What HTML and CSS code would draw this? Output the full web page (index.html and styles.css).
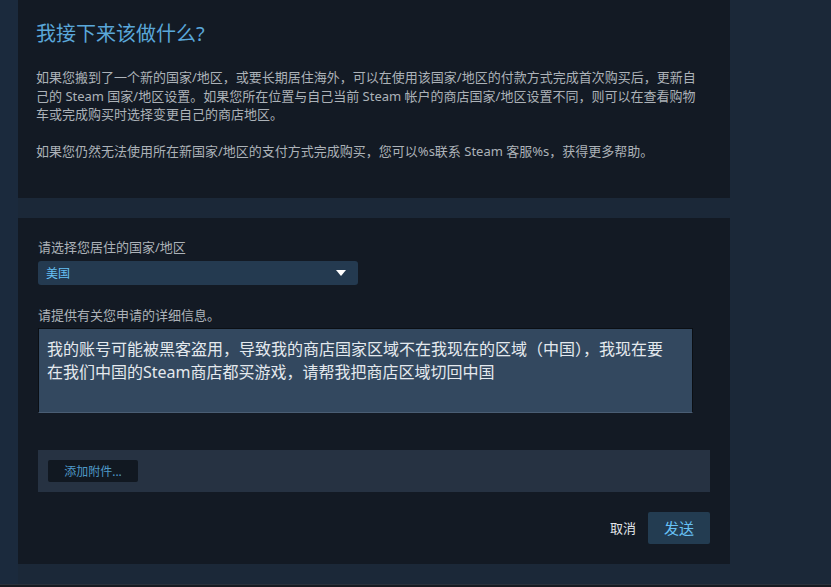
FILE: index.html
```html
<!doctype html>
<html lang="zh-cn">
  <head>
    <meta charset="utf-8" />
    <meta name="viewport" content="width=device-width" />
    <title>Steam 客服</title>
    <link rel="stylesheet" href="styles.css">
  </head>

  <body>
    <main class="page">
      <section class="panel info">
        <h2 class="info-title">我接下来该做什么?</h2>
        <p class="info-text">
          如果您搬到了一个新的国家/地区，或要长期居住海外，可以在使用该国家/地区的付款方式完成首次购买后，更新自己的 Steam 国家/地区设置。如果您所在位置与自己当前 Steam 帐户的商店国家/地区设置不同，则可以在查看购物车或完成购买时选择变更自己的商店地区。
        </p>
        <p class="info-text">
          如果您仍然无法使用所在新国家/地区的支付方式完成购买，您可以%s联系 Steam 客服%s，获得更多帮助。
        </p>
      </section>

      <form class="panel request">
        <label class="field-label" for="country">请选择您居住的国家/地区</label>
        <div class="select">
          <span class="select-value" id="country">美国</span>
          <span class="select-arrow"></span>
        </div>

        <label class="field-label details-label" for="details">请提供有关您申请的详细信息。</label>
        <div class="textarea" id="details">我的账号可能被黑客盗用，导致我的商店国家区域不在我现在的区域（中国），我现在要在我们中国的Steam商店都买游戏，请帮我把商店区域切回中国</div>

        <div class="attachments">
          <button type="button" class="attach-btn">添加附件...</button>
        </div>

        <div class="actions">
          <button type="button" class="cancel-btn">取消</button>
          <button type="button" class="send-btn">发送</button>
        </div>
      </form>
    </main>
    <footer class="footer"></footer>
  </body>
</html>
```

FILE: styles.css
```css
html {
  background: #171a21;
}
body {
  margin: 0;
  font-family: "Noto Sans", "Noto Sans CJK SC", sans-serif;
  background: linear-gradient(90deg, #1b2a3d 0, #1b2a3d 18px, #1b2838 18px);
}
.page {
  display: flex;
  flex-direction: column;
  gap: 20px;
  width: 712px;
  margin-left: 18px;
  padding-bottom: 20px;
}
.panel {
  background: #131a24;
}

/* top info block */
.info {
  padding: 20px 18px 37px;
}
.info-title {
  margin: 0 0 20px;
  font-size: 20px;
  line-height: 28px;
  font-weight: normal;
  color: #5aa7d9;
}
.info-text {
  margin: 0 0 18.5px;
  max-width: 662px;
  font-size: 13px;
  line-height: 18.5px;
  color: #acb2b8;
}
.info-text:last-child {
  margin-bottom: 0;
}

/* request form */
.request {
  display: flex;
  flex-direction: column;
  align-items: flex-start;
  padding: 20px;
}
.field-label {
  font-size: 13px;
  line-height: 18px;
  color: #acb2b8;
  margin-bottom: 5px;
}
.details-label {
  margin-top: 21px;
  margin-bottom: 4px;
}
.select {
  display: flex;
  align-items: center;
  justify-content: space-between;
  box-sizing: border-box;
  width: 320px;
  height: 24px;
  padding: 0 12px 0 8px;
  border-radius: 3px;
  background: #243a50;
}
.select-value {
  font-size: 12px;
  color: #67c1f5;
}
.select-arrow {
  width: 0;
  height: 0;
  border-left: 5px solid transparent;
  border-right: 5px solid transparent;
  border-top: 6px solid #ffffff;
}
.textarea {
  box-sizing: border-box;
  width: 655px;
  height: 85px;
  padding: 9px 22px 9px 8px;
  border: 1px solid #0b0f14;
  border-bottom-color: #4a5d73;
  background: #33485f;
  font-size: 16px;
  line-height: 23px;
  color: #e4e9ee;
}
.attachments {
  align-self: stretch;
  margin-top: 37px;
  padding: 10px;
  background: #263242;
}
.attach-btn {
  display: block;
  width: 90px;
  height: 22px;
  padding: 0;
  border: 0;
  border-radius: 2px;
  background: #111821;
  font-family: inherit;
  font-size: 12px;
  color: #4f98c8;
}
.actions {
  align-self: stretch;
  display: flex;
  justify-content: flex-end;
  align-items: center;
  gap: 12px;
  margin-top: 20px;
}
.cancel-btn {
  padding: 0;
  border: 0;
  background: none;
  font-family: inherit;
  font-size: 13px;
  color: #e2e6ea;
}
.send-btn {
  width: 62px;
  height: 32px;
  padding: 0;
  border: 0;
  border-radius: 2px;
  background: #233c51;
  font-family: inherit;
  font-size: 15px;
  color: #67c1f5;
}
.footer {
  height: 2px;
  border-top: 1px solid #2a323c;
  background: #171a21;
}
```
